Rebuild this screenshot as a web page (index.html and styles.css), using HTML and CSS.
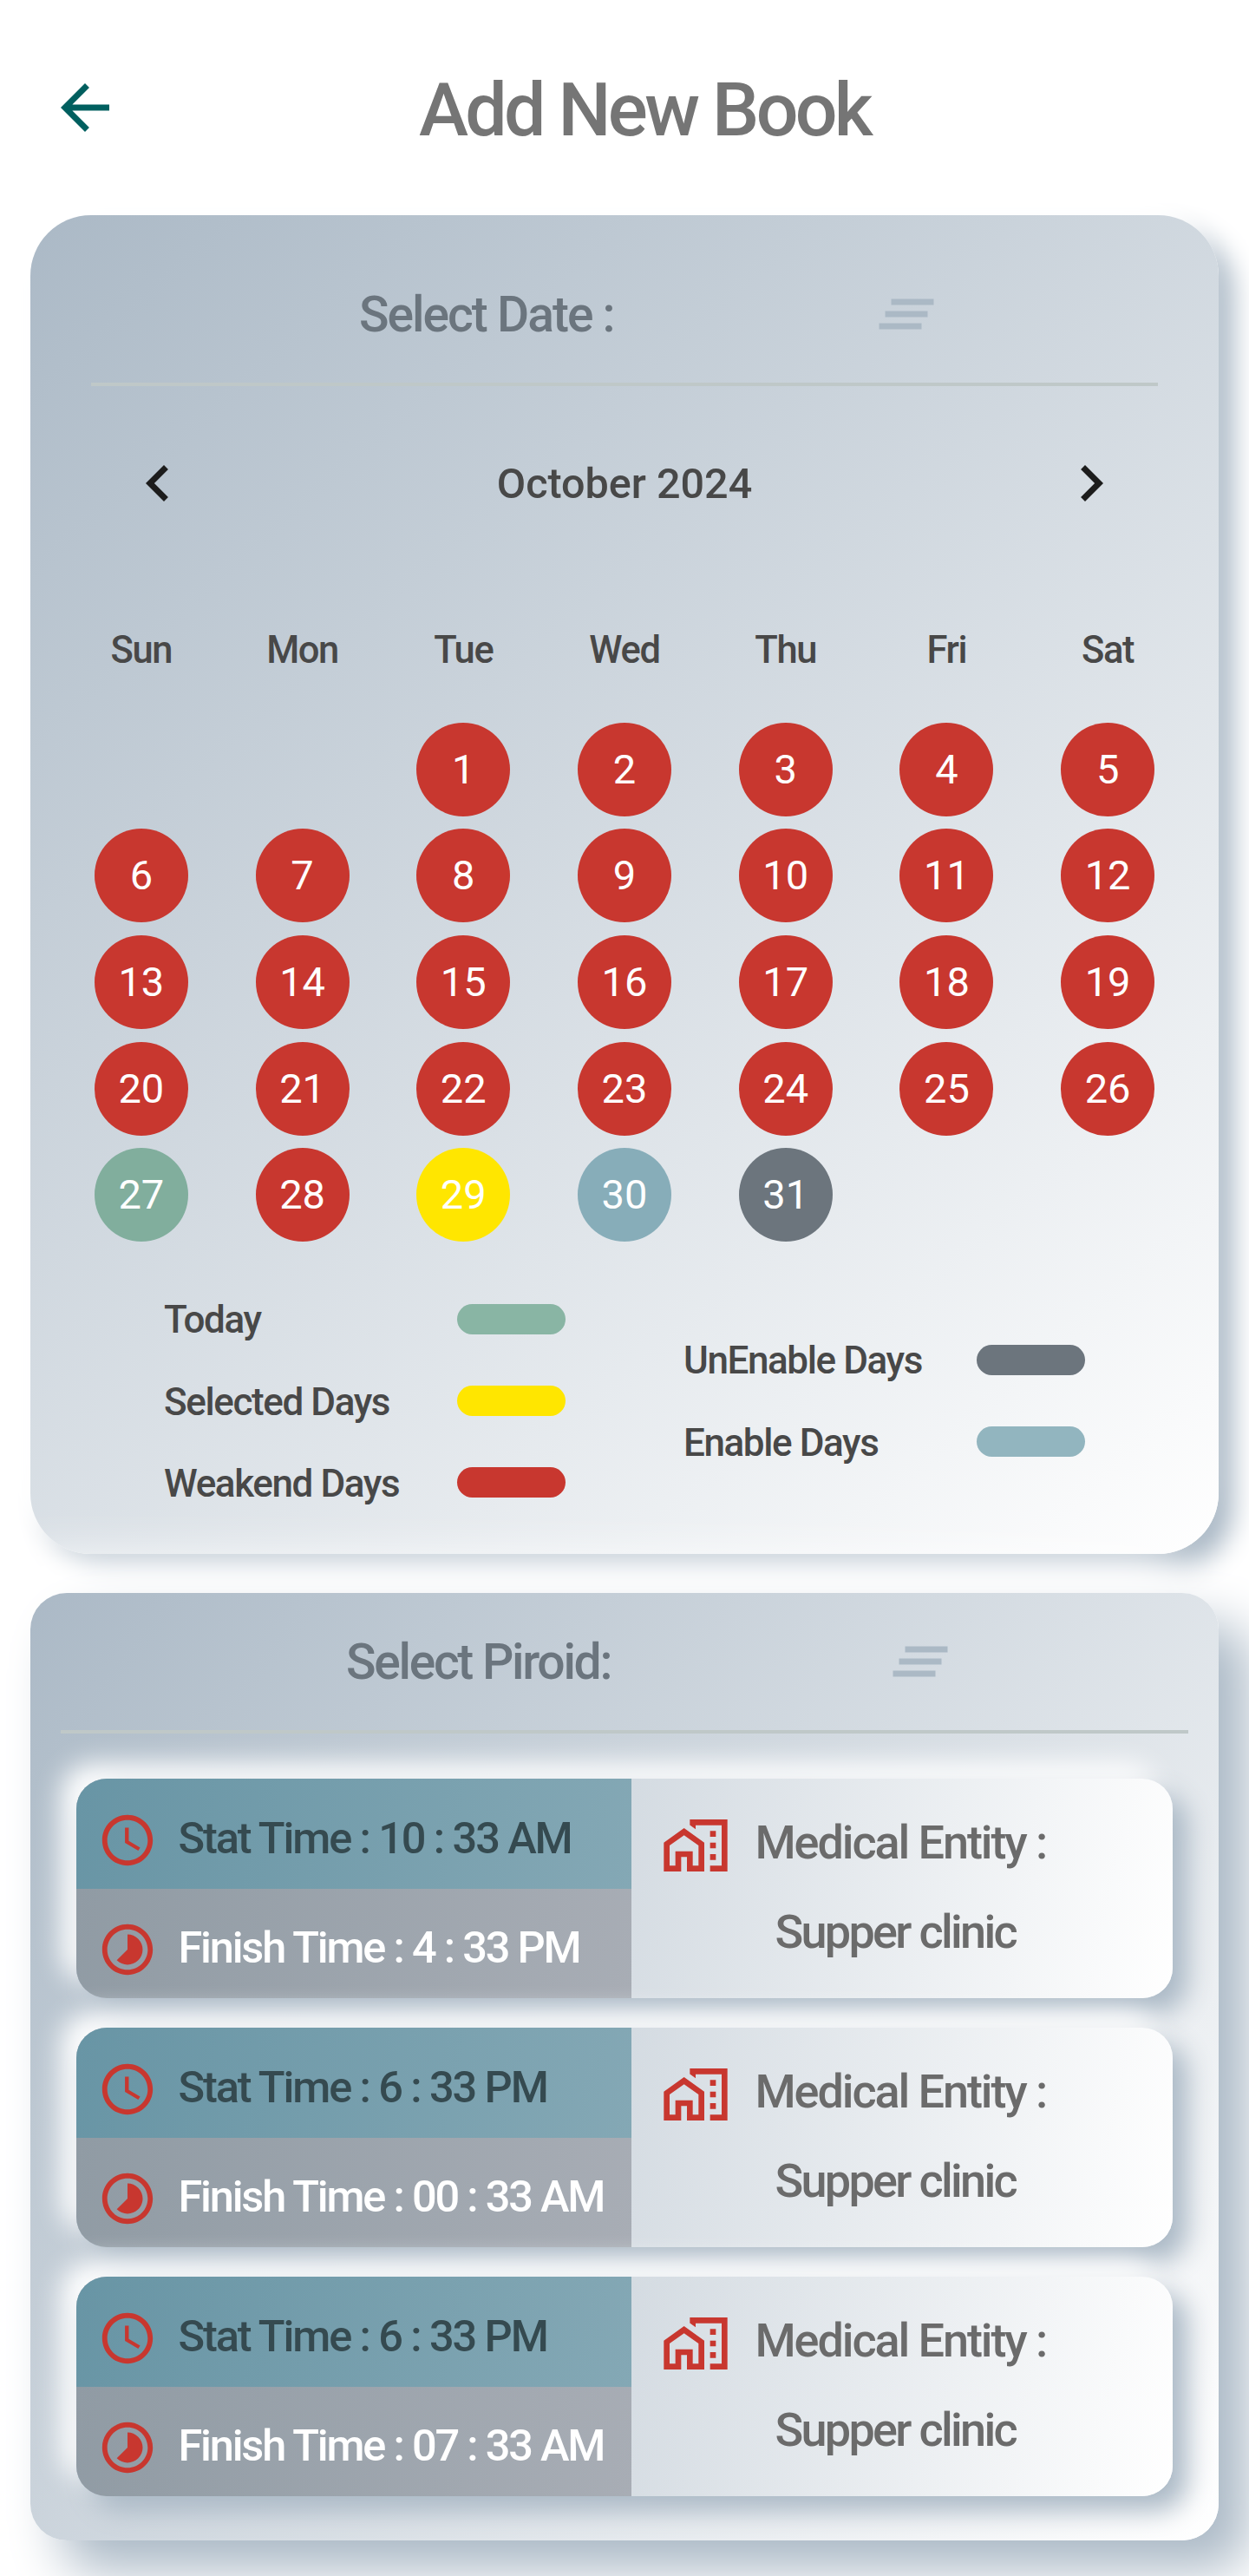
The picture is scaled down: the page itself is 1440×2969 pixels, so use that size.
FILE: index.html
```
<!DOCTYPE html>
<html lang="en">
<head>
<meta charset="utf-8">
<title>Add New Book</title>
<link rel="stylesheet" href="styles.css">
</head>
<body>
<svg class="sprite" aria-hidden="true">
  <symbol id="clear-all" viewBox="0 0 24 24"><path d="M5 13h14v-2H5v2zm-2 4h14v-2H3v2zM7 7v2h14V7H7z"/></symbol>
  <symbol id="clock" viewBox="0 0 24 24"><path d="M11.99 2C6.47 2 2 6.48 2 12s4.47 10 9.99 10C17.52 22 22 17.52 22 12S17.52 2 11.99 2zM12 20c-4.42 0-8-3.58-8-8s3.58-8 8-8 8 3.58 8 8-3.58 8-8 8zm.5-13H11v6l5.25 3.15.75-1.23-4.5-2.67z"/></symbol>
  <symbol id="timelapse" viewBox="0 0 24 24"><path d="M16.24 7.76C15.07 6.59 13.54 6 12 6v6l-4.24 4.24c2.34 2.34 6.14 2.34 8.49 0 2.34-2.34 2.34-6.14-.01-8.48zM12 2C6.48 2 2 6.48 2 12s4.48 10 10 10 10-4.48 10-10S17.52 2 12 2zm0 18c-4.42 0-8-3.58-8-8s3.58-8 8-8 8 3.58 8 8-3.58 8-8 8z"/></symbol>
  <symbol id="home-work" viewBox="0 0 24 24"><path d="M17 7h2v2h-2zM17 11h2v2h-2zM17 15h2v2h-2zM1 11v10h6v-5h2v5h6V11L8 6l-7 5zm12 8h-2v-5H5v5H3v-7l5-3.5 5 3.5v7zM10 3v1.97l2 1.43V5h9v14h-4v2h6V3H10z"/></symbol>
</svg>

<header class="topbar">
  <svg class="back" viewBox="0 0 24 24"><path d="M20 11H7.83l5.59-5.59L12 4l-8 8 8 8 1.41-1.41L7.83 13H20v-2z"/></svg>
  <h1>Add New Book</h1>
</header>

<main class="page">
  <section class="card card-date">
    <div class="card-head">
      <h2 class="date-title">Select Date :</h2>
      <svg class="menu"><use href="#clear-all"/></svg>
    </div>
    <div class="divider"></div>
    <div class="month">
      <svg viewBox="0 0 24 24"><path d="M15.41 7.41 14 6l-6 6 6 6 1.41-1.41L10.83 12z"/></svg>
      <span>October 2024</span>
      <svg viewBox="0 0 24 24"><path d="M10 6 8.59 7.41 13.17 12l-4.58 4.59L10 18l6-6z"/></svg>
    </div>
    <div class="week">
      <span>Sun</span><span>Mon</span><span>Tue</span><span>Wed</span><span>Thu</span><span>Fri</span><span>Sat</span>
    </div>
    <div class="days">
      <i class="first">1</i><i>2</i><i>3</i><i>4</i><i>5</i>
      <i>6</i><i>7</i><i>8</i><i>9</i><i>10</i><i>11</i><i>12</i>
      <i>13</i><i>14</i><i>15</i><i>16</i><i>17</i><i>18</i><i>19</i>
      <i>20</i><i>21</i><i>22</i><i>23</i><i>24</i><i>25</i><i>26</i>
      <i class="today">27</i><i>28</i><i class="selected">29</i><i class="enabled">30</i><i class="disabled">31</i>
    </div>
    <div class="legend">
      <ul>
        <li><span>Today</span><b class="today"></b></li>
        <li><span>Selected Days</span><b class="selected"></b></li>
        <li><span>Weakend Days</span><b></b></li>
      </ul>
      <ul>
        <li><span>UnEnable Days</span><b class="disabled"></b></li>
        <li><span>Enable Days</span><b class="enabled"></b></li>
      </ul>
    </div>
  </section>

  <section class="card card-period">
    <div class="card-head">
      <h2 class="period-title">Select Piroid:</h2>
      <svg class="menu"><use href="#clear-all"/></svg>
    </div>
    <div class="divider"></div>
    <div class="slots">
      <article class="slot">
        <div class="times">
          <div class="time start"><svg><use href="#clock"/></svg><span>Stat Time : 10 : 33 AM</span></div>
          <div class="time finish"><svg><use href="#timelapse"/></svg><span>Finish Time : 4 : 33 PM</span></div>
        </div>
        <div class="entity">
          <div class="entity-label"><svg><use href="#home-work"/></svg><span>Medical Entity :</span></div>
          <div class="entity-name">Supper clinic</div>
        </div>
      </article>
      <article class="slot">
        <div class="times">
          <div class="time start"><svg><use href="#clock"/></svg><span>Stat Time : 6 : 33 PM</span></div>
          <div class="time finish"><svg><use href="#timelapse"/></svg><span>Finish Time : 00 : 33 AM</span></div>
        </div>
        <div class="entity">
          <div class="entity-label"><svg><use href="#home-work"/></svg><span>Medical Entity :</span></div>
          <div class="entity-name">Supper clinic</div>
        </div>
      </article>
      <article class="slot">
        <div class="times">
          <div class="time start"><svg><use href="#clock"/></svg><span>Stat Time : 6 : 33 PM</span></div>
          <div class="time finish"><svg><use href="#timelapse"/></svg><span>Finish Time : 07 : 33 AM</span></div>
        </div>
        <div class="entity">
          <div class="entity-label"><svg><use href="#home-work"/></svg><span>Medical Entity :</span></div>
          <div class="entity-name">Supper clinic</div>
        </div>
      </article>
    </div>
  </section>
</main>
</body>
</html>
```
FILE: styles.css
```
* { box-sizing: border-box; }
html { overflow: hidden; }
body {
  margin: 0;
  width: 1440px;
  height: 2969px;
  overflow: hidden;
  background: #fff;
  font-family: Roboto, sans-serif;
  font-weight: 500;
  white-space: nowrap;
}
h1, h2, ul { margin: 0; padding: 0; font-weight: 500; list-style: none; }
svg { flex: none; fill: currentColor; }
.sprite { display: none; }

.topbar {
  display: flex;
  align-items: center;
  height: 248px;
  padding: 0 94px 0 56px;
}
.back { width: 84px; height: 84px; color: #005f5f; }
h1 {
  flex: 1;
  padding-top: 4px;
  text-align: center;
  font-size: 86px;
  letter-spacing: -3.7px;
  color: #757575;
}

.page { display: flex; flex-direction: column; gap: 45px; padding: 0 35px; }
.card { flex: none; }
.card-date {
  height: 1543px;
  padding-top: 35px;
  border-radius: 70px;
  background: linear-gradient(138.4deg, #abb9c6, #fff);
  box-shadow: -17px -17px 30px #fff, 17px 17px 30px #abb9c6;
}
.card-period {
  height: 1092px;
  border-radius: 42px;
  background: linear-gradient(128.5deg, #abb9c6, #fff);
  box-shadow: 35px 35px 60px #abb9c6, -35px -35px 60px #fff;
}
.card-head { display: flex; align-items: center; height: 158px; color: #6b757e; }
.card-head h2 { font-size: 57px; }
.date-title { width: 589px; margin-left: 379px; letter-spacing: -2px; }
.period-title { width: 620px; margin-left: 364px; letter-spacing: -2.3px; }
.menu { width: 84px; height: 84px; color: #abb9c5; }
.divider { height: 3.5px; margin: 0 35px; background: #bfc8c8; }
.card-date .divider { margin: 0 70px; }

.month {
  display: flex;
  align-items: center;
  justify-content: space-between;
  height: 224px;
  padding: 0 105px;
  font-size: 48.5px;
  color: #484848;
}
.month span { padding-top: 2px; }
.month svg { width: 84px; height: 84px; color: #1c1c1c; }
.week, .days {
  display: grid;
  grid-template-columns: repeat(7, 1fr);
  margin: 0 35px;
  justify-items: center;
  align-items: center;
}
.week { height: 157px; padding-top: 4px; font-size: 43.5px; letter-spacing: -1.4px; color: #484848; }
.days { grid-auto-rows: 122.6px; }
.days i {
  width: 108px;
  height: 108px;
  border-radius: 50%;
  background: #c8372f;
  color: #fff;
  font: 400 47px/108px Roboto, sans-serif;
  text-align: center;
}
.days .first { grid-column: 3; }
.days .today { background: #81ae9d; }
.days .selected { background: #ffe600; }
.days .enabled { background: #87adb9; }
.days .disabled { background: #6c757d; }

.legend {
  display: flex;
  align-items: center;
  gap: 136px;
  margin-top: 34.5px;
  padding-left: 154px;
  font-size: 44px;
  letter-spacing: -1.4px;
  color: #484848;
}
.legend ul { width: 463px; }
.legend li { display: flex; align-items: center; justify-content: space-between; height: 94.4px; }
.legend span { padding-top: 2px; }
.legend b { width: 125px; height: 35px; border-radius: 17.5px; background: #c8372f; }
.legend .today { background: #89b5a4; }
.legend .selected { background: #ffe600; }
.legend .enabled { background: #92b5bf; }
.legend .disabled { background: #6c757d; }

.slots { display: flex; flex-direction: column; gap: 34px; padding: 52.5px 53px 0 52.5px; }
.slot {
  display: flex;
  height: 253px;
  border-radius: 35px;
  background: linear-gradient(101.3deg, #abb9c6, #fff);
  box-shadow: 17px 17px 30px #abb9c6, -17px -17px 30px #fff;
}
.times { width: 640px; border-radius: 35px 0 0 35px; overflow: hidden; }
.time {
  display: flex;
  align-items: center;
  gap: 24px;
  height: 126.5px;
  padding: 10px 0 0 24px;
  font-size: 50.5px;
  letter-spacing: -2.1px;
}
.time svg { width: 70px; height: 70px; margin-top: 5px; color: #c8372f; }
.start { background: linear-gradient(101.3deg, #6895a5, #84a8b5); color: #354a50; }
.finish { background: linear-gradient(101.3deg, #909ba4, #a8adb5); color: #fff; letter-spacing: -2.2px; }
.entity { flex: 1; padding-top: 22px; font-size: 54px; color: #6b6b6b; }
.entity-label { display: flex; align-items: center; gap: 29px; height: 103px; padding-left: 34px; letter-spacing: -2.1px; }
.entity-label svg { width: 80px; height: 80px; margin-top: 6px; color: #c8372f; }
.entity-name { height: 103px; padding-right: 15px; line-height: 104px; text-align: center; letter-spacing: -2.7px; }
```
